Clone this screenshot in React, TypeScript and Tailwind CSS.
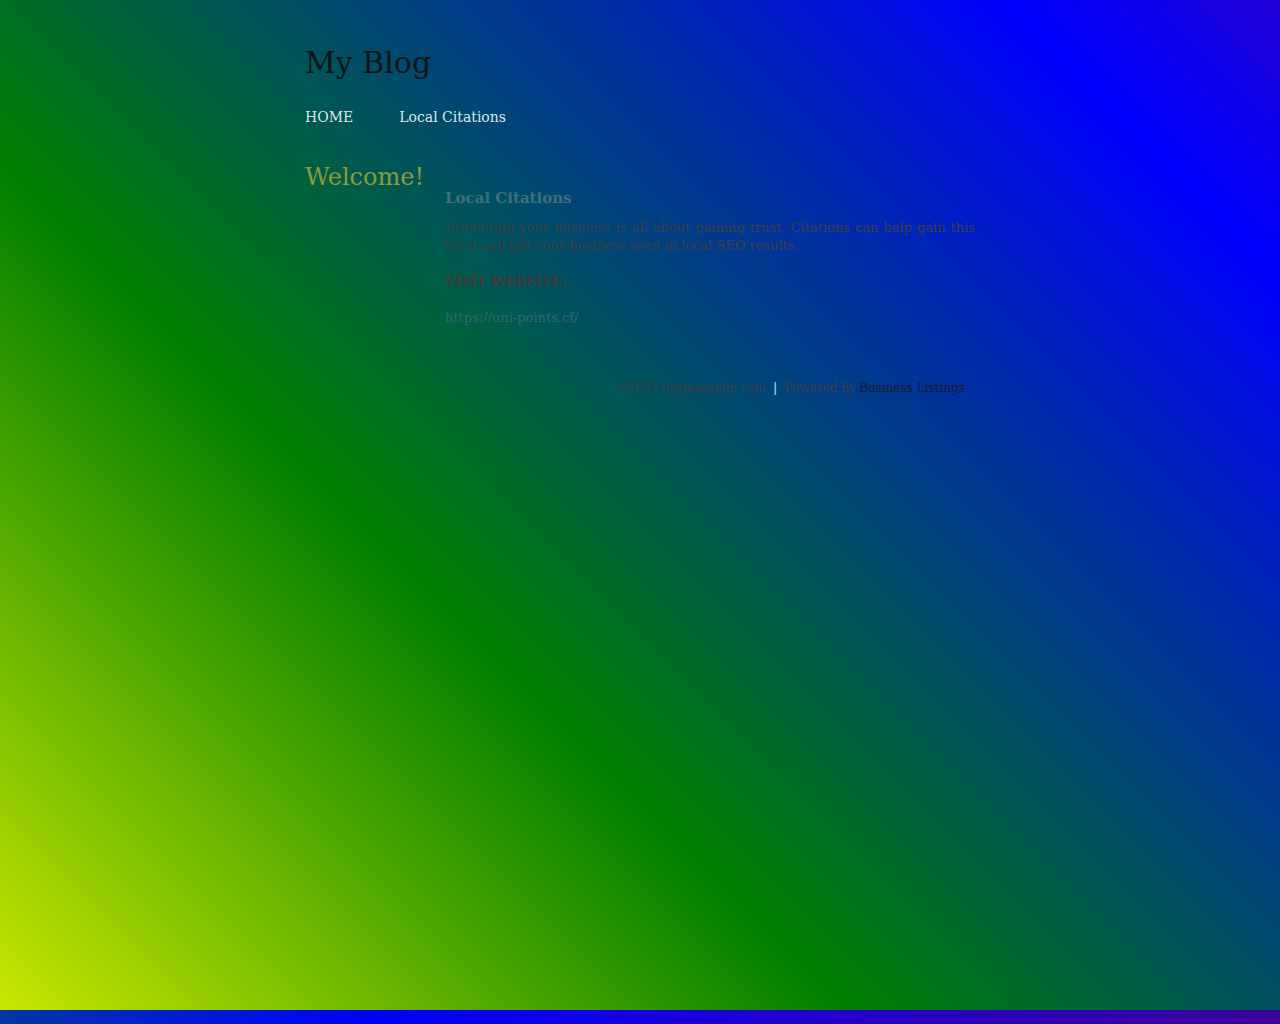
export default function App() {
  return (
    <div className="min-h-screen w-full font-['DejaVu_Serif',serif]">
      <div className="h-[1010px] bg-[linear-gradient(45deg,#c8e600_0%,#008000_37%,#0000ff_88%,#3a00b8_110%)]">
        <div className="mx-auto w-[670px] pt-[45px]">
          {/* Header */}
          <h1 className="text-[30px] leading-[35px] text-[#141414]">My Blog</h1>
          <nav className="mt-[27px] flex gap-[46px] text-[14px] leading-[20px] text-[#dce6ee]">
            <a href="#">HOME</a>
            <a href="#">Local Citations</a>
          </nav>

          {/* Content */}
          <div className="mt-[36px] flex">
            <div className="w-[140px] shrink-0">
              <h2 className="text-[24px] leading-[28px] text-[#8c9a3c]">Welcome!</h2>
            </div>
            <div className="w-[530px] pt-[25px]">
              <h3 className="text-[15px] font-bold leading-[20px] text-[#3e6f7c]">
                Local Citations
              </h3>
              <p className="mt-[11px] text-justify text-[13px] leading-[18px] text-[#3e3e46]">
                Promoting your business is all about gaining trust. Citations can help gain this
                trust and get your business seen in local SEO results.
              </p>
              <p className="mt-[18px] text-[13px] font-bold leading-[18px] text-[#46383c]">
                VISIT WEBSITE:
              </p>
              <p className="mt-[18px] text-[13px] leading-[18px] text-[#33676e]">
                https://uni-points.cf/
              </p>
            </div>
          </div>

          {/* Footer */}
          <div className="mt-[52px] pr-[10px] text-right text-[12px] leading-[18px] text-[#3e3e46]">
            ©2023 usamaaslam.com
            <span className="mx-[3px] font-bold text-[#a8c4e6]"> | </span>
            Powered by{" "}
            <a href="#" className="text-[#1a1c2c]">
              Business Listings
            </a>
          </div>
        </div>
      </div>
      <div className="h-[14px] bg-[linear-gradient(to_right,#0535a5_0%,#0000ff_30%,#1a00d8_55%,#3c009a_100%)]" />
    </div>
  );
}
